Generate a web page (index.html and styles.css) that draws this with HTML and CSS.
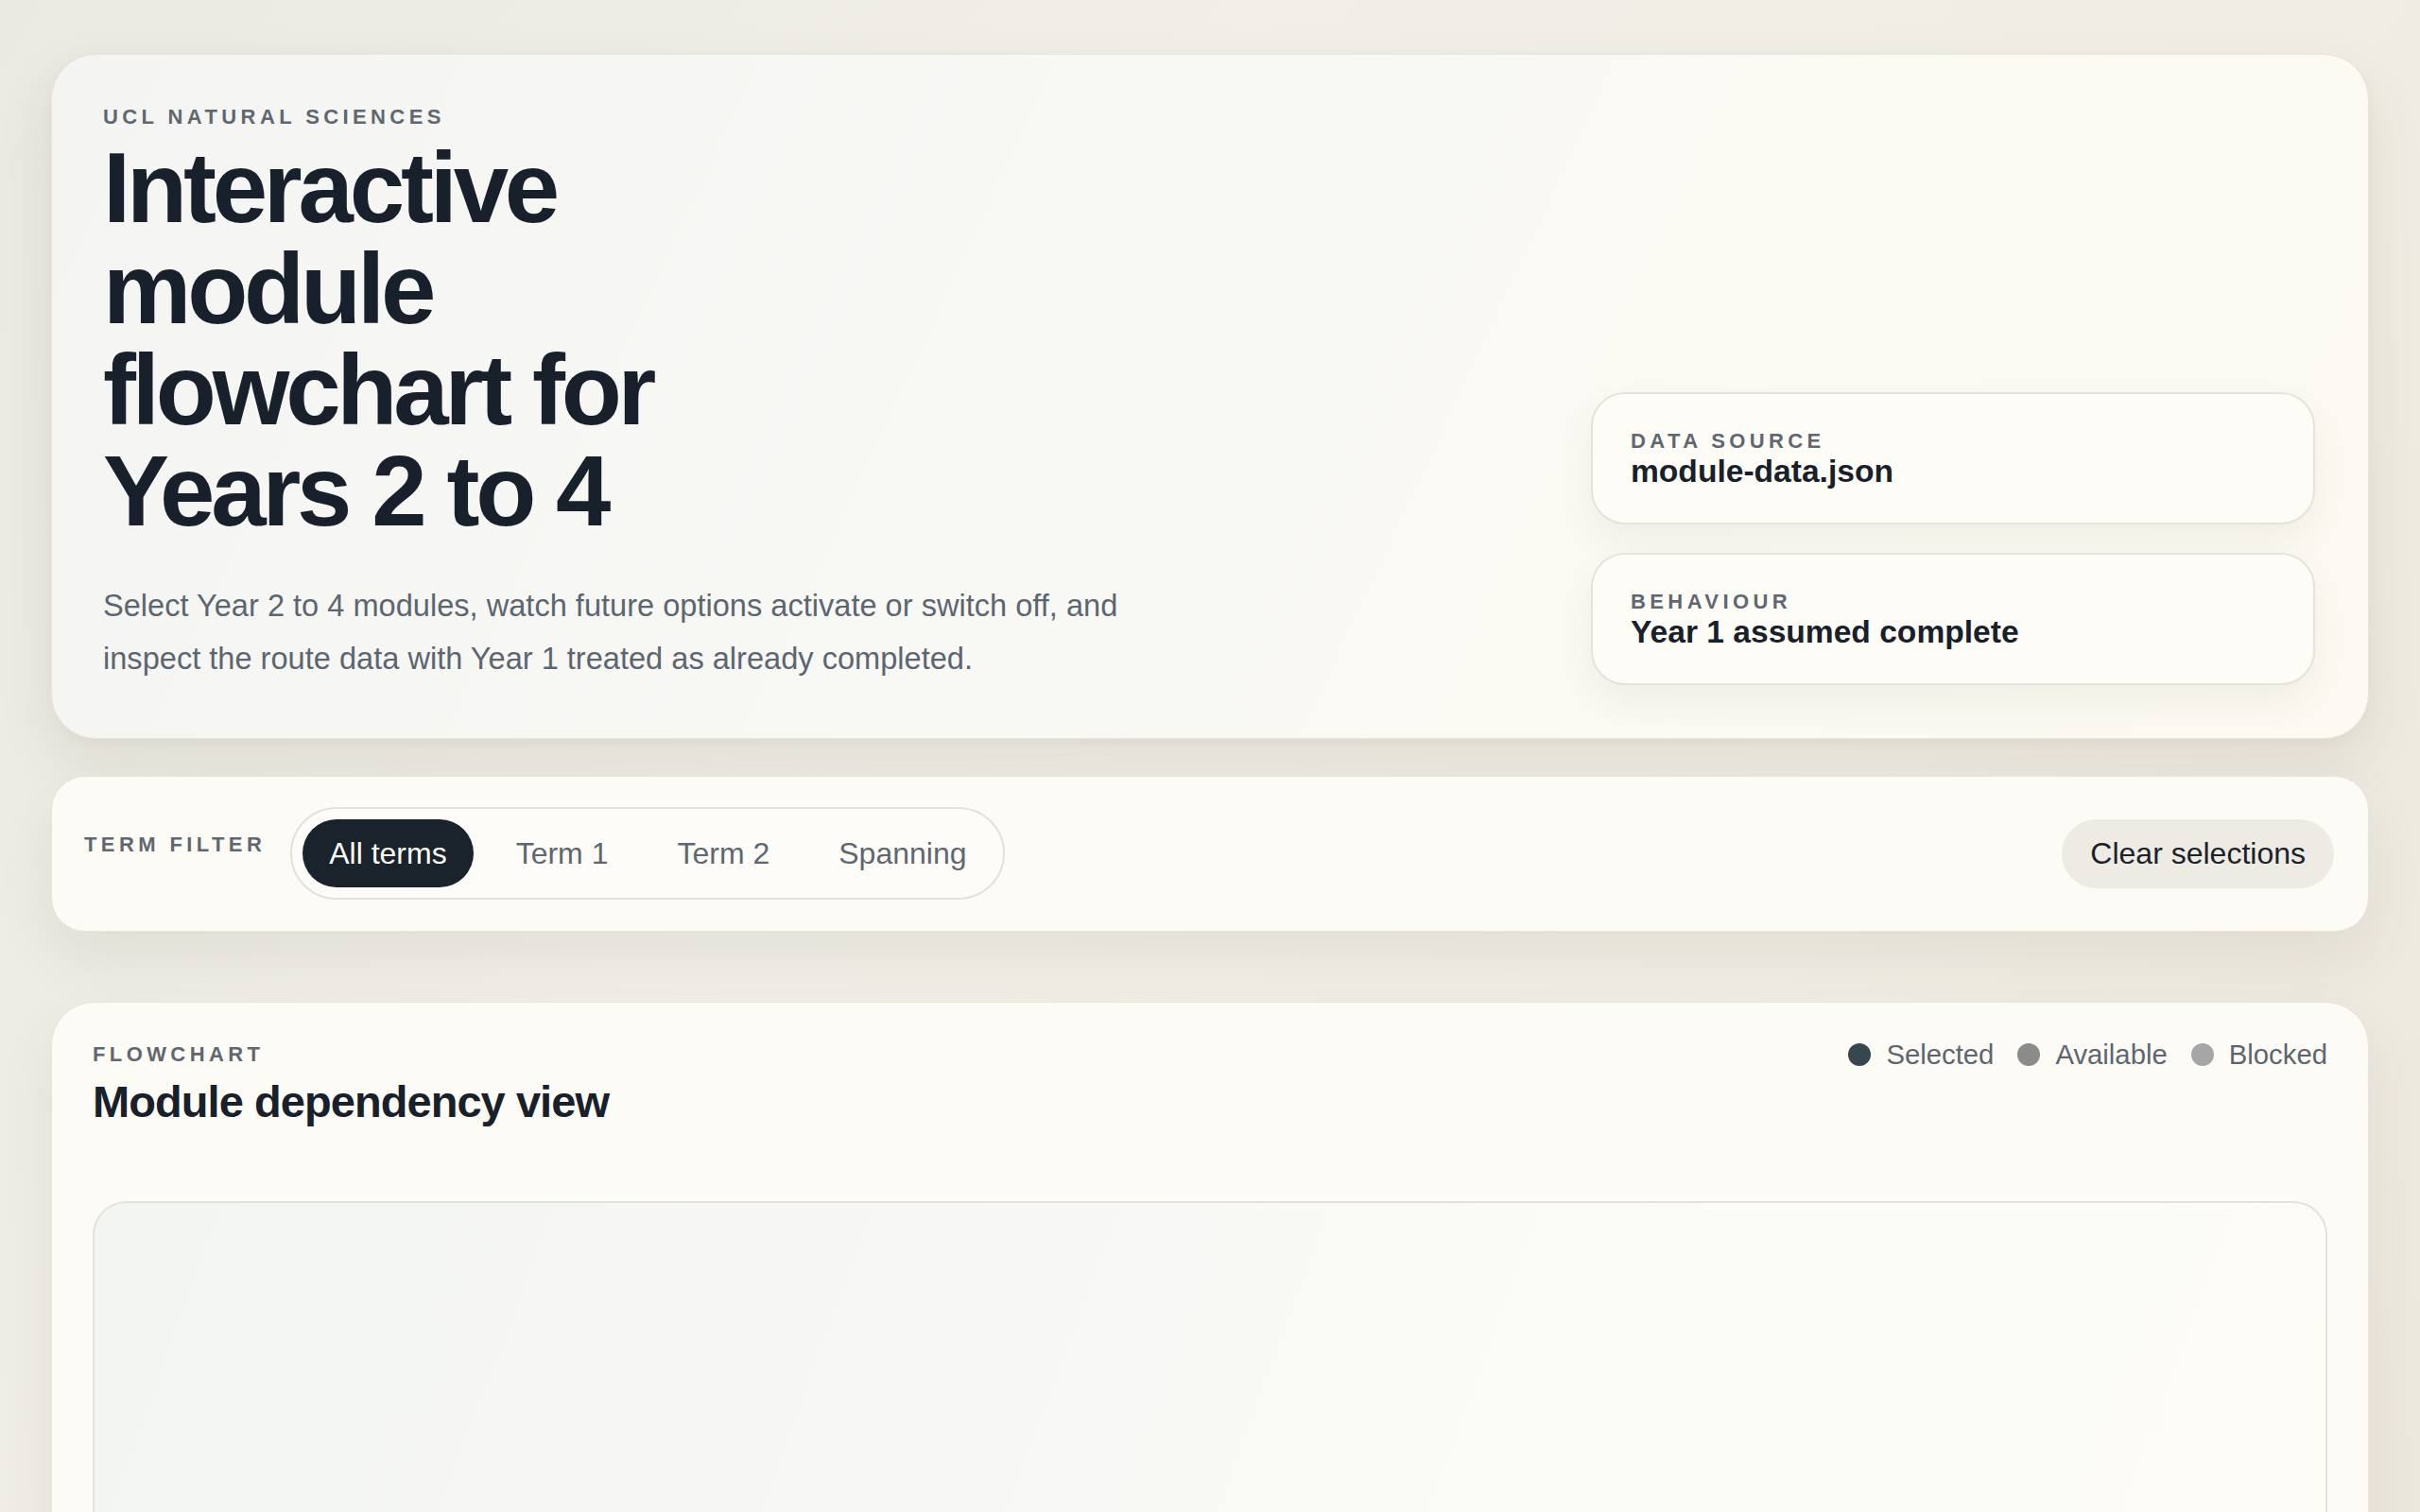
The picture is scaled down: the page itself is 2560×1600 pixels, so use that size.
FILE: index.html
```html
<!DOCTYPE html>
<html lang="en">
<head>
<meta charset="utf-8">
<title>Interactive module flowchart</title>
<link rel="stylesheet" href="styles.css">
</head>
<body>
<div class="page">
  <header class="hero">
    <div class="hero-main">
      <p class="eyebrow">UCL Natural Sciences</p>
      <h1 class="hero-title">Interactive module flowchart for Years 2 to 4</h1>
      <p class="hero-lede">Select Year 2 to 4 modules, watch future options activate or switch off, and inspect the route data with Year 1 treated as already completed.</p>
    </div>
    <div class="hero-meta">
      <div class="meta-card">
        <span class="eyebrow">Data source</span>
        <strong class="meta-value">module-data.json</strong>
      </div>
      <div class="meta-card">
        <span class="eyebrow">Behaviour</span>
        <strong class="meta-value">Year 1 assumed complete</strong>
      </div>
    </div>
  </header>

  <section class="toolbar">
    <div class="filter">
      <span class="eyebrow filter-label">Term filter</span>
      <div class="segmented">
        <button class="seg is-active">All terms</button>
        <button class="seg">Term 1</button>
        <button class="seg">Term 2</button>
        <button class="seg">Spanning</button>
      </div>
    </div>
    <button class="clear-btn">Clear selections</button>
  </section>

  <section class="chart-card">
    <div class="chart-head">
      <div>
        <p class="eyebrow">Flowchart</p>
        <h2 class="chart-title">Module dependency view</h2>
      </div>
      <ul class="legend">
        <li><span class="dot dot-selected"></span>Selected</li>
        <li><span class="dot dot-available"></span>Available</li>
        <li><span class="dot dot-blocked"></span>Blocked</li>
      </ul>
    </div>
    <div class="canvas"></div>
  </section>
</div>
</body>
</html>
```

FILE: styles.css
```css
* { box-sizing: border-box; }

html, body {
  margin: 0;
  padding: 0;
}

body {
  font-family: "Liberation Sans", Arial, Helvetica, sans-serif;
  color: #18212b;
  background: linear-gradient(120deg, #eae9e2 0%, #f1efe8 35%, #f1ede4 65%, #ebe6da 100%);
  min-height: 1600px;
}

.page {
  padding: 57px 54px 60px;
}

.eyebrow {
  margin: 0;
  display: block;
  font-size: 22px;
  font-weight: 700;
  letter-spacing: 0.2em;
  text-transform: uppercase;
  color: #5f6771;
  line-height: 1.15;
}

/* HERO */
.hero {
  display: flex;
  justify-content: space-between;
  align-items: flex-end;
  padding: 53px 56px 56px 54px;
  border: 1px solid #e6e4dd;
  border-radius: 48px;
  background: linear-gradient(115deg, #f4f5f2 0%, #f8f8f5 40%, #fbfaf3 70%, #fcfaf2 100%);
  box-shadow: 0 26px 60px rgba(90, 80, 50, 0.10), 0 4px 12px rgba(90, 80, 50, 0.04);
}

.hero-main {
  max-width: 1150px;
}

.hero-title {
  margin: 9px 0 0;
  max-width: 660px;
  font-size: 105px;
  line-height: 107px;
  font-weight: 700;
  letter-spacing: -0.04em;
  color: #18212b;
}

.hero-lede {
  margin: 40px 0 0;
  font-size: 32.6px;
  line-height: 56px;
  color: #5c6670;
}

.hero-meta {
  width: 766px;
  display: flex;
  flex-direction: column;
  gap: 30px;
}

.meta-card {
  padding: 37px 40px 35px;
  border: 2px solid #e5e3dc;
  border-radius: 36px;
  background: #fdfcf6;
  box-shadow: 0 18px 40px rgba(90, 80, 50, 0.07);
}

.meta-value {
  display: block;
  font-size: 33.6px;
  line-height: 1.15;
  font-weight: 700;
  color: #18212b;
}

/* TOOLBAR */
.toolbar {
  margin-top: 39px;
  display: flex;
  justify-content: space-between;
  align-items: center;
  padding: 32px 36px 33px 34px;
  border: 1px solid #e7e4dc;
  border-radius: 36px;
  background: #fdfbf5;
  box-shadow: 0 26px 60px rgba(90, 80, 50, 0.09);
}

.filter {
  display: flex;
  align-items: center;
  gap: 26px;
}

.filter-label {
  padding-bottom: 20px;
}

.segmented {
  display: flex;
  gap: 17px;
  padding: 11px;
  border: 2px solid #e3e1da;
  border-radius: 999px;
  background: #fdfcf8;
}

.seg {
  height: 72px;
  padding: 0 28px;
  border: 0;
  border-radius: 999px;
  background: transparent;
  font-family: inherit;
  font-size: 32px;
  color: #5f6771;
  cursor: pointer;
}

.seg.is-active {
  background: #1a222b;
  color: #ffffff;
}

.clear-btn {
  height: 73px;
  padding: 0 30px;
  border: 0;
  border-radius: 999px;
  background: #eeebe4;
  font-family: inherit;
  font-size: 32px;
  color: #1a222b;
  cursor: pointer;
}

/* CHART */
.chart-card {
  margin-top: 74px;
  padding: 42px 43px 43px;
  border: 1px solid #e7e4dc;
  border-radius: 46px;
  background: #fdfbf5;
  box-shadow: 0 26px 60px rgba(90, 80, 50, 0.08);
}

.chart-head {
  display: flex;
  justify-content: space-between;
  align-items: flex-start;
}

.chart-title {
  margin: 10px 0 0;
  font-size: 47px;
  font-weight: 700;
  letter-spacing: -0.02em;
  line-height: 1.15;
  color: #18212b;
}

.legend {
  list-style: none;
  margin: -4px 0 0;
  padding: 0;
  display: flex;
  gap: 25px;
  font-size: 29.3px;
  color: #5d6670;
}

.legend li {
  display: flex;
  align-items: center;
  gap: 16px;
}

.dot {
  width: 24px;
  height: 24px;
  border-radius: 50%;
  display: inline-block;
}

.dot-selected { background: #37474f; }
.dot-available { background: #8b8b8b; }
.dot-blocked { background: #a6a6a6; }

.canvas {
  margin-top: 78px;
  height: 760px;
  border: 2px solid #e4e2db;
  border-radius: 36px;
  background: linear-gradient(110deg, #f3f5f2 0%, #f7f8f5 35%, #fbfbf7 65%, #fdfcf7 100%);
}
```
